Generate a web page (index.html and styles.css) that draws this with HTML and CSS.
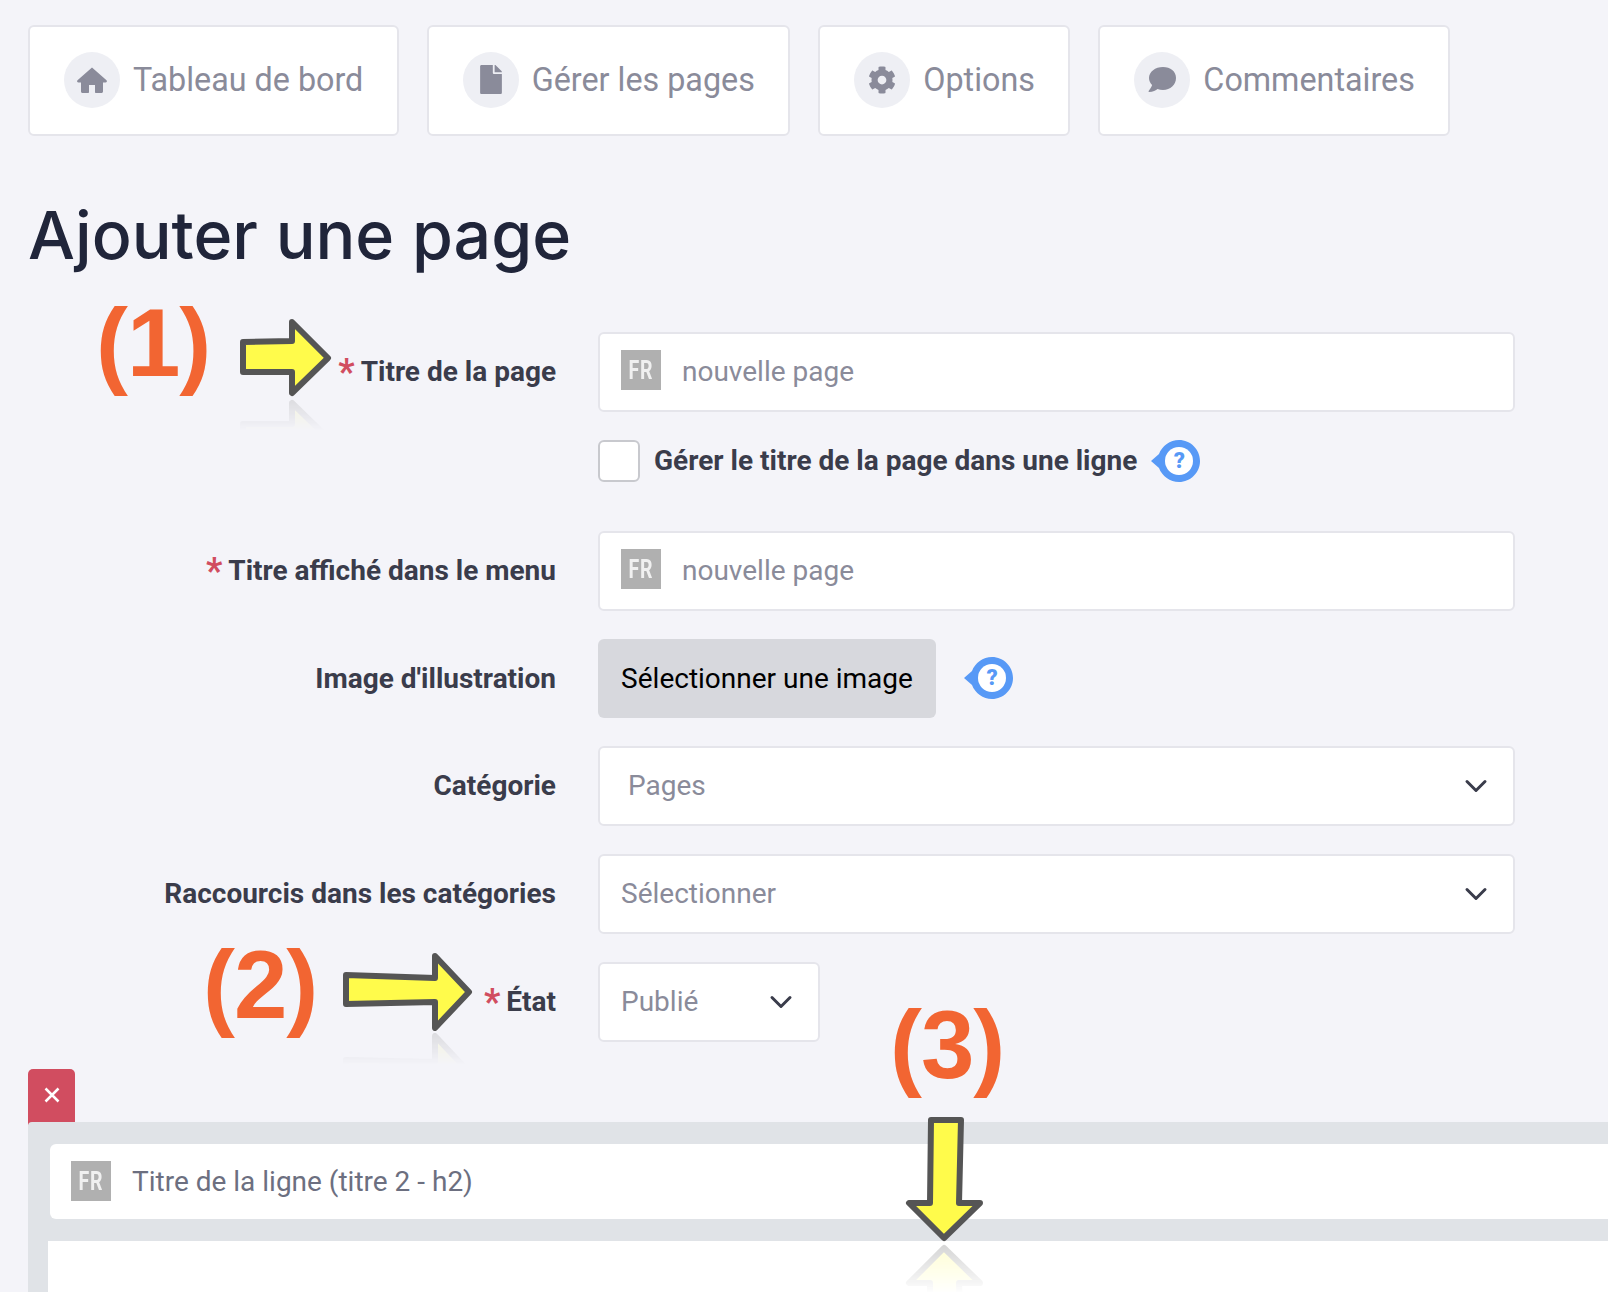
FILE: index.html
```html
<!DOCTYPE html>
<html lang="fr">
<head>
  <meta charset="UTF-8" />
  <meta name="viewport" content="width=device-width, initial-scale=1.0" />
  <title>Ajouter une page</title>
  <link rel="stylesheet" href="styles.css">
</head>
<body>
  <nav class="tabs">
    <a class="tab">
      <span class="tab-icon">
        <svg width="32" height="28" viewBox="0 0 32 28"><path d="M16 1.500 1.500 14.200c-.9.9-.3 2.300 1 2.300H5v9c0 .9.700 1.500 1.500 1.500H12c.6 0 1-.4 1-1v-7h6v7c0 .6.400 1 1 1h5.500c.8 0 1.500-.6 1.500-1.500v-9h2.500c1.300 0 1.900-1.400 1-2.300z"/></svg>
      </span>
      Tableau de bord
    </a>
    <a class="tab">
      <span class="tab-icon">
        <svg width="22" height="29" viewBox="0 0 384 512"><path d="M224 136V0H24C10.700 0 0 10.700 0 24v464c0 13.300 10.700 24 24 24h336c13.300 0 24-10.700 24-24V160H248c-13.200 0-24-10.800-24-24zm160-14.100v6.100H256V0h6.100c6.400 0 12.500 2.500 17 7l97.900 98c4.500 4.500 7 10.600 7 16.900z"/></svg>
      </span>
      Gérer les pages
    </a>
    <a class="tab">
      <span class="tab-icon">
        <svg width="28" height="28" viewBox="0 0 512 512"><path d="M487.400 315.700l-42.600-24.600c4.300-23.200 4.300-47 0-70.200l42.600-24.600c4.900-2.800 7.100-8.600 5.500-14-11.100-35.600-30-67.800-54.700-94.600-3.800-4.100-10-5.100-14.800-2.300L380.800 110c-17.900-15.400-38.500-27.300-60.800-35.100V25.800c0-5.600-3.900-10.500-9.400-11.700-36.700-8.200-74.300-7.800-109.200 0-5.500 1.200-9.400 6.100-9.400 11.700V75c-22.200 7.900-42.800 19.800-60.800 35.100L88.700 85.500c-4.900-2.800-11-1.900-14.800 2.300-24.700 26.700-43.600 58.900-54.700 94.600-1.700 5.400.6 11.200 5.500 14L67.300 221c-4.300 23.200-4.300 47 0 70.200l-42.600 24.600c-4.900 2.800-7.100 8.600-5.500 14 11.100 35.600 30 67.800 54.700 94.600 3.800 4.100 10 5.100 14.800 2.300l42.600-24.600c17.900 15.400 38.500 27.300 60.800 35.100v49.200c0 5.600 3.900 10.500 9.400 11.700 36.700 8.200 74.300 7.800 109.200 0 5.500-1.200 9.400-6.100 9.400-11.700v-49.200c22.200-7.900 42.800-19.800 60.800-35.100l42.600 24.600c4.900 2.800 11 1.900 14.800-2.300 24.700-26.700 43.600-58.900 54.700-94.600 1.500-5.500-.7-11.300-5.600-14.100zM256 336c-44.100 0-80-35.900-80-80s35.900-80 80-80 80 35.900 80 80-35.900 80-80 80z"/></svg>
      </span>
      Options
    </a>
    <a class="tab">
      <span class="tab-icon">
        <svg width="28" height="25" viewBox="0 0 28 25"><path d="M15 0C7.300 0 1 4.800 1 11c0 2.700 1.200 5.200 3.100 7.100C3.400 20.800 .6 24 .6 24.200c-.1.300.1.800.5.800 3.600 0 7-1.900 8.400-3 1.700.6 3.500 1 5.500 1 7.400 0 13-5.300 13-12S22.400 0 15 0z"/></svg>
      </span>
      Commentaires
    </a>
  </nav>

  <h1>Ajouter une page</h1>

  <form class="page-form">
    <label class="field-label"><span class="req">*</span>Titre de la page</label>
    <div class="field">
      <span class="lang"><i>FR</i></span>
      <input type="text" placeholder="nouvelle page" />
    </div>

    <div class="check-row">
      <span class="check-box"></span>
      <label class="check-label">Gérer le titre de la page dans une ligne</label>
      <span class="help">
        <svg width="49" height="42" viewBox="0 0 49 42"><path d="M28 0C39.600 0 49 9.400 49 21S39.600 42 28 42C19 42 11 36 8 28L0 21l8-7C11 6 19 0 28 0z"/></svg>
        <b>?</b>
      </span>
    </div>

    <label class="field-label"><span class="req">*</span>Titre affiché dans le menu</label>
    <div class="field">
      <span class="lang"><i>FR</i></span>
      <input type="text" placeholder="nouvelle page" />
    </div>

    <label class="field-label">Image d'illustration</label>
    <div class="image-row">
      <button type="button" class="image-btn">Sélectionner une image</button>
      <span class="help">
        <svg width="49" height="42" viewBox="0 0 49 42"><path d="M28 0C39.600 0 49 9.400 49 21S39.600 42 28 42C19 42 11 36 8 28L0 21l8-7C11 6 19 0 28 0z"/></svg>
        <b>?</b>
      </span>
    </div>

    <label class="field-label">Catégorie</label>
    <div class="field select pages">
      Pages
      <svg class="chevron" width="24" height="14" viewBox="0 0 24 14"><path d="M3 2.500l9 9 9-9"/></svg>
    </div>

    <label class="field-label">Raccourcis dans les catégories</label>
    <div class="field select">
      Sélectionner
      <svg class="chevron" width="24" height="14" viewBox="0 0 24 14"><path d="M3 2.500l9 9 9-9"/></svg>
    </div>

    <label class="field-label"><span class="req">*</span>État</label>
    <div class="field select state">
      Publié
      <svg class="chevron" width="24" height="14" viewBox="0 0 24 14"><path d="M3 2.500l9 9 9-9"/></svg>
    </div>
  </form>

  <button type="button" class="close-btn">
    <svg width="16" height="16" viewBox="0 0 16 16"><path d="M1.500 1.500l13 13M14.500 1.500l-13 13"/></svg>
  </button>
  <section class="row-panel">
    <div class="row-title">
      <span class="lang"><i>FR</i></span>
      Titre de la ligne (titre 2 - h2)
    </div>
    <div class="row-body"></div>
  </section>

  <!-- annotations drawn over the screenshot -->
  <span class="mark mark-1">(1)</span>
  <span class="mark mark-2">(2)</span>
  <span class="mark mark-3">(3)</span>

  <svg class="arrow arrow-1" width="92" height="79" viewBox="0 0 92 79"><path d="M3 24L52 23V4L88 40 52 75V54H3z"/></svg>
  <svg class="arrow arrow-2" width="130" height="79" viewBox="0 0 130 79"><path d="M3 23L92 26V4L126 40 92 76V50L3 52z"/></svg>
  <svg class="arrow arrow-3" width="79" height="125" viewBox="0 0 79 125"><path d="M26 3H56L54 86H75L39 121 4 86H25z"/></svg>
</body>
</html>
```

FILE: styles.css
```css
* {
  box-sizing: border-box;
}
html, body {
  height: 1292px;
  overflow: hidden;
}
body {
  position: relative;
  margin: 0;
  background-color: #f4f4f9;
  font-family: 'Roboto', sans-serif;
  color: #3a3c4b;
}

/* top tabs */
.tabs {
  display: flex;
  gap: 28px;
  padding: 25px 0 0 28px;
}
.tab {
  display: flex;
  align-items: center;
  gap: 13px;
  height: 111px;
  padding: 0 33.4px 2px 34px;
  background-color: white;
  border: 2px solid #e5e5eb;
  border-radius: 6px;
  font-size: 32.3px;
  color: #8a8b9a;
}
.tab-icon {
  display: flex;
  align-items: center;
  justify-content: center;
  width: 56px;
  height: 56px;
  border-radius: 50%;
  background-color: #eeeff4;
}
.tab-icon svg {
  fill: #8a8b9a;
}

h1 {
  margin: 59px 0 0 28px;
  font-family: 'Inter', sans-serif;
  font-size: 66.25px;
  font-weight: 500;
  line-height: 80px;
  color: #20253a;
}

/* form */
.page-form {
  display: grid;
  grid-template-columns: 528px 917px;
  column-gap: 42px;
  row-gap: 28px;
  margin: 56.6px 0 0 28px;
  align-items: center;
}
.field-label {
  font-size: 28px;
  font-weight: 700;
  text-align: right;
}
.req {
  margin-right: 6px;
  font-size: 36px;
  line-height: 20px;
  vertical-align: -3px;
  color: #d14d60;
}
.field {
  display: flex;
  align-items: center;
  height: 80px;
  padding: 0 21px;
  background-color: white;
  border: 2px solid #e5e5eb;
  border-radius: 6px;
  font-size: 28px;
  color: #8a8b9a;
}
.field input {
  flex: 1;
  min-width: 0;
  margin-left: 21px;
  border: none;
  outline: none;
  padding: 0;
  background: none;
  font: inherit;
}
.field input::placeholder {
  color: #8a8b9a;
  opacity: 1;
}
.lang {
  display: flex;
  align-items: center;
  justify-content: center;
  flex: none;
  width: 40px;
  height: 40px;
  margin-bottom: 3px;
  background-color: #b0b0b0;
}
.row-title .lang {
  margin-bottom: 0;
}
.lang i {
  font-size: 25px;
  font-style: normal;
  font-weight: 700;
  letter-spacing: 1px;
  color: #f0f0f0;
  transform: scaleX(0.78);
  filter: blur(0.6px);
}
.check-row {
  grid-column: 2;
  display: flex;
  align-items: center;
  height: 42px;
  margin: 0 0 21.2px;
}
.check-box {
  width: 42px;
  height: 42px;
  margin-right: 14px;
  background-color: white;
  border: 2px solid #c8c9ce;
  border-radius: 6px;
}
.check-label {
  font-size: 28px;
  font-weight: 700;
}
.help {
  position: relative;
  display: flex;
  align-items: center;
  justify-content: center;
  width: 49px;
  height: 42px;
  margin-left: 14px;
}
.help svg {
  fill: #5799f6;
}
.help::after {
  content: "";
  position: absolute;
  left: 14px;
  top: 7px;
  width: 28px;
  height: 28px;
  border-radius: 50%;
  background-color: white;
}
.help b {
  position: absolute;
  z-index: 1;
  left: 14px;
  top: 7px;
  width: 28px;
  text-align: center;
  font-size: 22px;
  font-weight: 900;
  line-height: 28px;
  color: #5799f6;
}
.image-row {
  display: flex;
  align-items: center;
}
.image-btn {
  width: 338px;
  height: 79px;
  padding: 0;
  background-color: #d7d8dd;
  border: none;
  border-radius: 6px;
  font-family: inherit;
  font-size: 28px;
  color: black;
}
.image-row .help {
  margin-left: 28px;
}
.select {
  justify-content: space-between;
}
.select .chevron {
  fill: none;
  stroke: #3a3c4b;
  stroke-width: 3;
  stroke-linecap: round;
  stroke-linejoin: round;
  margin-right: 4px;
}
.pages {
  padding-left: 28px;
}
.state {
  width: 222px;
}

/* block under the form */
.close-btn {
  display: flex;
  align-items: center;
  justify-content: center;
  width: 47px;
  height: 56px;
  margin: 27px 0 0 28px;
  padding: 0 0 3px;
  background-color: #d14d60;
  border: none;
  border-radius: 5px 5px 0 0;
}
.close-btn svg {
  fill: none;
  stroke: white;
  stroke-width: 2.500;
}
.row-panel {
  margin: -3px 0 0 28px;
  padding: 22px 0 0 20px;
  height: 200px;
  background-color: #e0e3e7;
  border-radius: 4px 0 0 0;
}
.row-title {
  display: flex;
  align-items: center;
  gap: 21px;
  height: 75px;
  margin-left: 2px;
  padding-left: 21px;
  background-color: white;
  border-radius: 6px 0 0 6px;
  font-size: 28px;
  color: #6c6f80;
}
.row-body {
  height: 100px;
  margin-top: 22px;
  background-color: white;
}

/* annotations */
.mark {
  position: absolute;
  font-family: 'Liberation Sans', sans-serif;
  font-size: 96px;
  font-weight: 700;
  letter-spacing: -1px;
  line-height: 110px;
  color: #f26532;
}
.mark-1 {
  left: 96px;
  top: 288px;
}
.mark-2 {
  left: 203px;
  top: 930px;
}
.mark-3 {
  left: 890px;
  top: 990px;
}
.arrow {
  position: absolute;
  fill: #fffb4b;
  stroke: #555;
  stroke-width: 6;
  stroke-linejoin: round;
  -webkit-box-reflect: below 2px linear-gradient(transparent 60%, rgba(255, 255, 255, 0.15));
}
.arrow-1 {
  left: 240px;
  top: 318px;
}
.arrow-2 {
  left: 343px;
  top: 952px;
}
.arrow-3 {
  left: 905px;
  top: 1117px;
  -webkit-box-reflect: below 2px linear-gradient(transparent 60%, rgba(255, 255, 255, 0.25));
}
```
